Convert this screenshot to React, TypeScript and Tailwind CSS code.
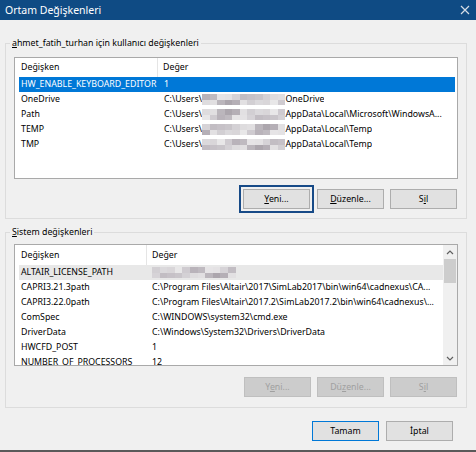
import React from "react";

const mosaicShades = [
  "bg-[#d9d6d9]", "bg-[#b9b3ba]", "bg-[#e4e2e4]", "bg-[#c6c1c7]", "bg-[#dedcde]",
  "bg-[#aca6ad]", "bg-[#d2cfd3]", "bg-[#e8e7e8]", "bg-[#bfbac0]", "bg-[#d6d3d7]",
  "bg-[#c9c5ca]", "bg-[#e1dfe1]", "bg-[#b5afb6]", "bg-[#dbd9dc]", "bg-[#cfcbd0]",
  "bg-[#e6e4e6]", "bg-[#c2bdc3]", "bg-[#d4d1d5]", "bg-[#bbb6bc]", "bg-[#e2e0e2]",
];

// blurred user name from the screenshot
const Mosaic = ({ cols, seed = 0 }: { cols: number; seed?: number }) => (
  <span className="inline-flex flex-col h-[11px] align-middle">
    {[0, 1].map((r) => (
      <span key={r} className="flex h-[5.5px]">
        {Array.from({ length: cols }).map((_, c) => (
          <span
            key={c}
            className={`w-[7.6px] h-full ${mosaicShades[(c * 7 + r * 3 + seed) % mosaicShades.length]}`}
          />
        ))}
      </span>
    ))}
  </span>
);

const Chevron = ({ up }: { up?: boolean }) => (
  <svg width="8" height="5" viewBox="0 0 8 5" className={up ? "" : "rotate-180"}>
    <path d="M1 4 L4 1 L7 4" fill="none" stroke="#606060" strokeWidth="1.2" />
  </svg>
);

const Btn = ({ children, disabled, focused, primary }: { children: React.ReactNode; disabled?: boolean; focused?: boolean; primary?: boolean }) => (
  <div
    className={
      "w-[67px] h-[20px] flex items-center justify-center border " +
      (disabled
        ? "bg-[#cccccc] border-[#bfbfbf] text-[#a0a0a0]"
        : primary
        ? "bg-[#e1e1e1] border-[#0078d7] text-black"
        : "bg-[#e1e1e1] border-[#adadad] text-black") +
      (focused ? " shadow-[0_0_0_2px_#f0f0f0,0_0_0_4px_#174a87]" : "")
    }
  >
    {children}
  </div>
);

const userVars = [
  { name: "HW_ENABLE_KEYBOARD_EDITOR", value: <>1</>, selected: true },
  { name: "OneDrive", value: <>C:\Users\<Mosaic cols={11} seed={1} />OneDrive</> },
  { name: "Path", value: <>C:\Users\<Mosaic cols={11} seed={4} />AppData\Local\Microsoft\WindowsA...</> },
  { name: "TEMP", value: <>C:\Users\<Mosaic cols={11} seed={9} />AppData\Local\Temp</> },
  { name: "TMP", value: <>C:\Users\<Mosaic cols={11} seed={13} />AppData\Local\Temp</> },
];

const sysVars = [
  { name: "ALTAIR_LICENSE_PATH", value: <Mosaic cols={11} seed={6} />, selected: true },
  { name: "CAPRI3.21.3path", value: <>C:\Program Files\Altair\2017\SimLab2017\bin\win64\cadnexus\CA...</> },
  { name: "CAPRI3.22.0path", value: <>C:\Program Files\Altair\2017.2\SimLab2017.2\bin\win64\cadnexus\...</> },
  { name: "ComSpec", value: <>C:\WINDOWS\system32\cmd.exe</> },
  { name: "DriverData", value: <>C:\Windows\System32\Drivers\DriverData</> },
  { name: "HWCFD_POST", value: <>1</> },
  { name: "NUMBER_OF_PROCESSORS", value: <>12</> },
];

export default function App() {
  return (
    <div className="w-[476px] h-[452px] bg-[#f0f0f0] flex flex-col overflow-hidden border-b-2 border-[#5a5a5a] font-['Noto_Sans',sans-serif] text-[8.8px] leading-[15px] text-black">
      {/* title bar */}
      <div className="h-[20px] shrink-0 bg-[#0f4b84] flex items-center justify-between pl-[5px] pr-[6px] text-white text-[10.5px]">
        <span>Ortam Değişkenleri</span>
        <svg width="10" height="10" viewBox="0 0 10 10">
          <path d="M1 1 L9 9 M9 1 L1 9" stroke="#d6dde6" strokeWidth="1.2" />
        </svg>
      </div>

      <div className="pl-[5px] w-[467px]">
        {/* user variables */}
        <fieldset className="mt-[16px] border border-[#dcdcdc] pb-[9px]">
          <legend className="ml-[4px] px-[2px]">
            <span className="underline">a</span>hmet_fatih_turhan için kullanıcı değişkenleri
          </legend>
          <div className="mt-[6px] ml-[8px] w-[444px] h-[122px] bg-white border border-[#a9a9a9] overflow-hidden">
            <div className="flex h-[19px] items-center">
              <div className="w-[143px] pl-[6px] border-r border-[#e5e5e5] h-full flex items-center">Değişken</div>
              <div className="pl-[5px]">Değer</div>
            </div>
            <div className="pl-[4px] pr-[2px]">
              {userVars.map((v) => (
                <div key={v.name} className={"flex h-[15px] items-center whitespace-nowrap " + (v.selected ? "bg-[#0078d7] text-white" : "")}>
                  <div className="w-[139px] pl-[2px] overflow-hidden">{v.name}</div>
                  <div className="pl-[6px] overflow-hidden">{v.value}</div>
                </div>
              ))}
            </div>
          </div>
          <div className="mt-[10px] flex justify-end gap-[6px] pr-[9px]">
            <div className="mr-[1px]">
              <Btn focused><span><span className="underline">Y</span>eni...</span></Btn>
            </div>
            <Btn><span><span className="underline">D</span>üzenle...</span></Btn>
            <Btn><span>S<span className="underline">i</span>l</span></Btn>
          </div>
        </fieldset>

        {/* system variables */}
        <fieldset className="mt-[6px] border border-[#dcdcdc] pb-[10px]">
          <legend className="ml-[4px] px-[2px]">
            <span className="underline">S</span>istem değişkenleri
          </legend>
          <div className="mt-[4px] ml-[8px] w-[444px] h-[122px] bg-white border border-[#a9a9a9] overflow-hidden flex">
            <div className="flex-1 min-w-0">
              <div className="flex h-[20px] items-center">
                <div className="w-[132px] pl-[6px] border-r border-[#e5e5e5] h-full flex items-center">Değişken</div>
                <div className="pl-[5px]">Değer</div>
              </div>
              <div className="pl-[4px]">
                {sysVars.map((v) => (
                  <div key={v.name} className={"flex h-[15px] items-center whitespace-nowrap " + (v.selected ? "bg-[#e8e8e8]" : "")}>
                    <div className="w-[128px] pl-[2px] overflow-hidden">{v.name}</div>
                    <div className="pl-[5px] overflow-hidden">{v.value}</div>
                  </div>
                ))}
              </div>
            </div>
            <div className="w-[14px] bg-[#f0f0f0] flex flex-col items-center">
              <div className="h-[14px] flex items-center justify-center"><Chevron up /></div>
              <div className="w-[12px] h-[24px] bg-[#cdcdcd]" />
              <div className="flex-1" />
              <div className="h-[14px] flex items-center justify-center"><Chevron /></div>
            </div>
          </div>
          <div className="mt-[11px] flex justify-end gap-[6px] pr-[9px]">
            <Btn disabled><span>Y<span className="underline">e</span>ni...</span></Btn>
            <Btn disabled><span>Dü<span className="underline">z</span>enle...</span></Btn>
            <Btn disabled><span>S<span className="underline">i</span>l</span></Btn>
          </div>
        </fieldset>
      </div>

      {/* dialog buttons */}
      <div className="mt-[13px] flex justify-end gap-[7px] pr-[23px]">
        <Btn primary>Tamam</Btn>
        <Btn>İptal</Btn>
      </div>
    </div>
  );
}
